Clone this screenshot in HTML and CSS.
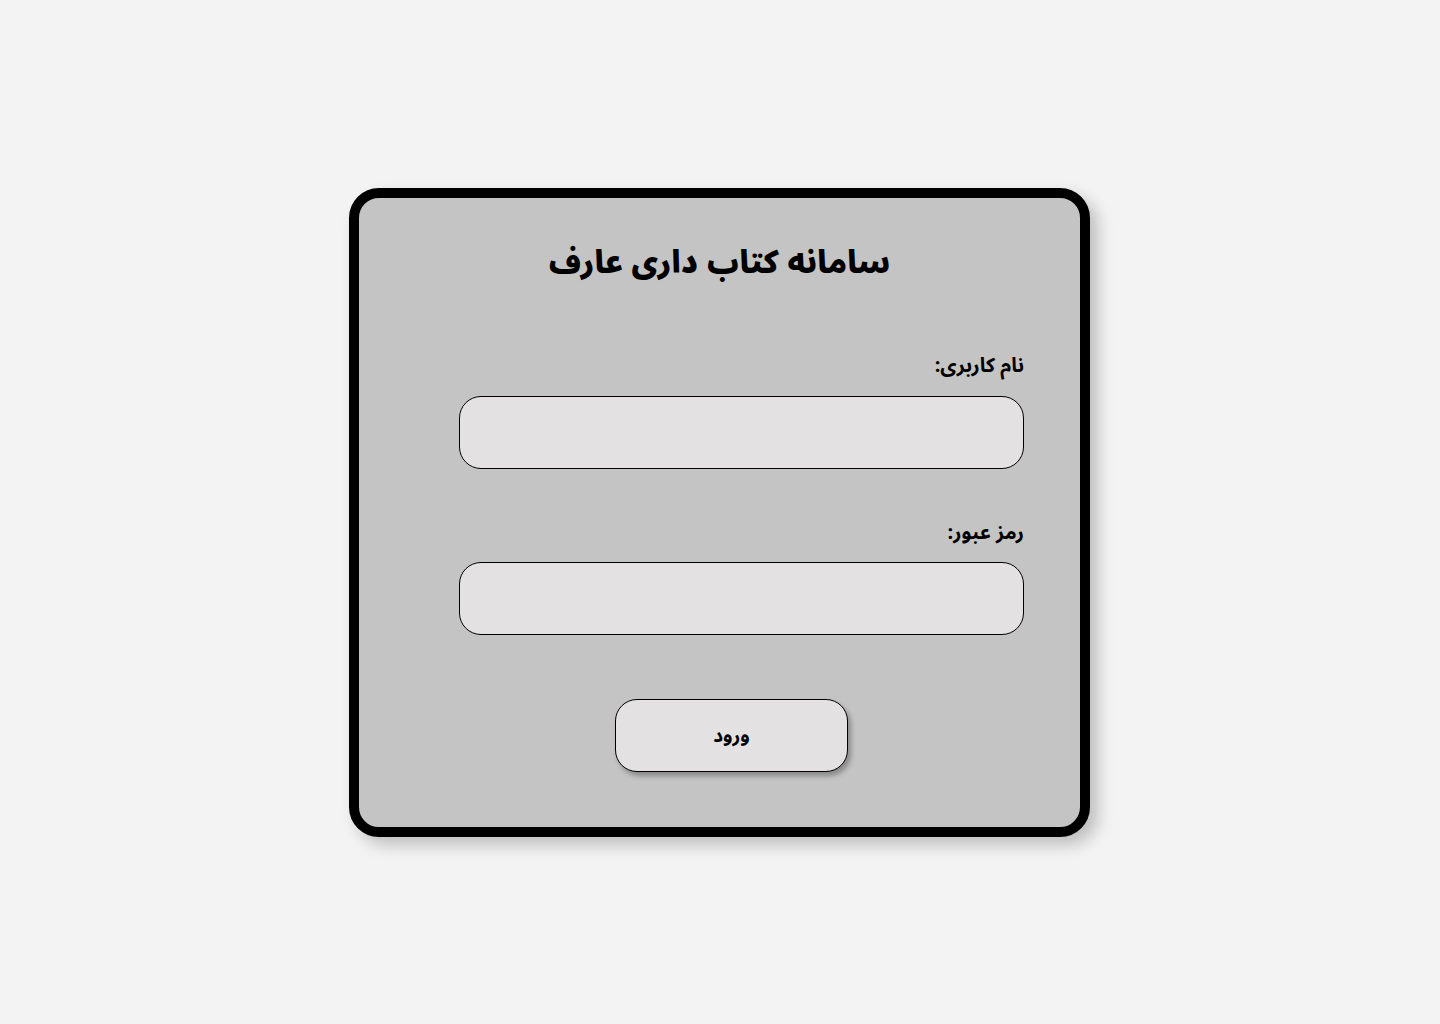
FILE: index.html
```html
<!DOCTYPE html>
<html lang="fa" dir="rtl">
<head>
<meta charset="utf-8">
<title>سامانه کتاب داری عارف</title>
<link rel="stylesheet" href="styles.css">
</head>
<body>
<main class="page">
  <section class="card">
    <h1 class="title">سامانه کتاب داری عارف</h1>
    <form class="form">
      <label class="label" for="user">نام کاربری:</label>
      <input class="field" id="user" type="text">
      <label class="label label-pass" for="pass">رمز عبور:</label>
      <input class="field" id="pass" type="password">
      <div class="actions">
        <button class="btn" type="button">ورود</button>
      </div>
    </form>
  </section>
</main>
</body>
</html>
```
FILE: styles.css
```css
* { box-sizing: border-box; }
html, body { margin: 0; padding: 0; }
body {
  background: #f3f3f3;
  font-family: "Noto Sans Arabic", "Noto Naskh Arabic", "DejaVu Sans", sans-serif;
  width: 1440px;
  height: 1024px;
}
.page {
  display: flex;
  justify-content: center;
  padding-top: 188px;
}
.card {
  width: 741px;
  height: 649px;
  margin-right: 1px;
  background: #c4c4c4;
  border: 10px solid #000;
  border-radius: 30px;
  box-shadow: 8px 8px 16px rgba(0,0,0,0.22);
  display: flex;
  flex-direction: column;
  align-items: center;
}
.title {
  margin: 41px 0 0 0;
  font-size: 31px;
  font-weight: 900;
  line-height: 49px;
  color: #000;
}
.form {
  width: 565px;
  margin-right: 56px;
  align-self: flex-start;
  display: flex;
  flex-direction: column;
  margin-top: 64px;
}
.label {
  font-size: 20px;
  font-weight: bold;
  line-height: 28px;
  color: #000;
  text-align: right;
  margin-bottom: 16px;
}
.label-pass { margin-top: 50px; margin-bottom: 15px; }
.field {
  width: 565px;
  height: 73px;
  background: #e3e1e2;
  border: 1px solid #000;
  border-radius: 22px;
  outline: none;
}
.actions {
  display: flex;
  justify-content: center;
  margin-top: 64px;
  padding-right: 20px;
}
.btn {
  width: 233px;
  height: 73px;
  background: #e3e1e2;
  border: 1px solid #000;
  border-radius: 22px;
  box-shadow: 3px 4px 5px rgba(0,0,0,0.3);
  font-family: inherit;
  font-size: 19px;
  font-weight: bold;
  color: #000;
}
```
